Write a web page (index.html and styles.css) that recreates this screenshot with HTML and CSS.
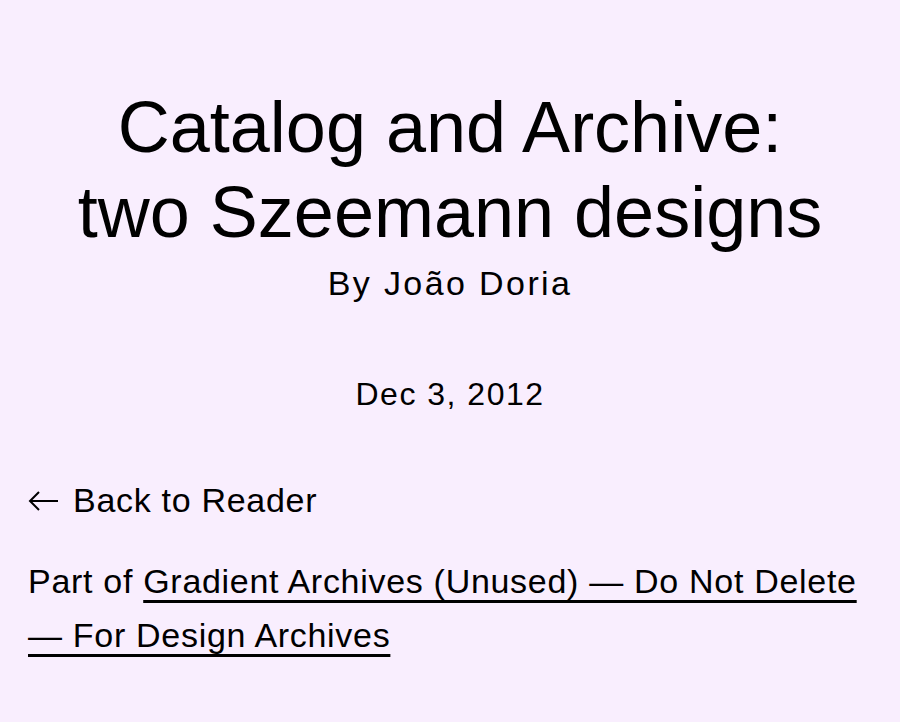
FILE: index.html
```html
<!DOCTYPE html>
<html>
<head>
  <title>Catalog and Archive: two Szeemann designs</title>
  <meta charset="UTF-8">
  <meta name="viewport" content="width=device-width, initial-scale=1.0">
  <link rel="stylesheet" href="styles.css">
</head>
<body>
  <header class="post-head">
    <h1 class="post-title">Catalog and Archive: two Szeemann designs</h1>
    <p class="post-author">By João Doria</p>
    <p class="post-date">Dec 3, 2012</p>
  </header>

  <nav class="post-nav">
    <a class="back-link" href="#">
      <svg class="back-arrow" width="31" height="22" viewBox="0 0 31 22" fill="none" stroke="#000" stroke-width="2">
        <path d="M30 11H2M11 2L2 11l9 9"/>
      </svg>
      Back to Reader
    </a>
    <p class="part-of">Part of <a href="#">Gradient Archives (Unused) — Do Not Delete — For Design Archives</a></p>
  </nav>
</body>
</html>
```

FILE: styles.css
```css
body { margin: 0; padding: 0 28px; background: #f9eefe; color: #000; font-family: "Liberation Sans", Arial, sans-serif; }
.post-head { text-align: center; padding-top: 85px; }
.post-title { font-size: 72px; font-weight: 400; line-height: 85px; margin: 0 auto; max-width: 760px; }
.post-author { font-size: 34px; line-height: 40px; letter-spacing: 2.4px; margin: 8px 0 0; }
.post-date { font-size: 32px; line-height: 40px; letter-spacing: 1.5px; margin: 71px 0 0; }
.post-nav { margin-top: 66px; font-size: 34px; letter-spacing: 0.7px; }
.back-link { display: flex; align-items: center; gap: 14px; color: #000; text-decoration: none; line-height: 40px; }
.back-arrow { flex: none; margin-top: 2px; }
.part-of { margin: 34px 0 0; line-height: 54px; }
.part-of a { color: #000; text-decoration: underline; text-decoration-thickness: 3px; text-underline-offset: 7px; }
```
